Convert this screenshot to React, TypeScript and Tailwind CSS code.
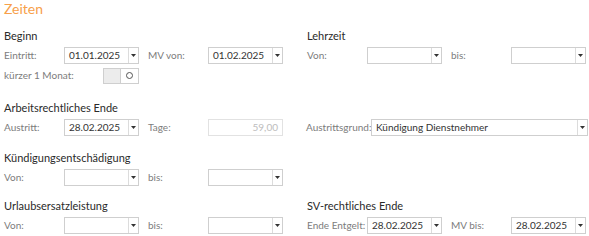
import type { ReactNode } from 'react';

const FONT = 'Lato, "Noto Sans", "Liberation Sans", sans-serif';

function Arrow() {
  return (
    <svg width="5" height="3" viewBox="0 0 5 3" className="block">
      <path d="M0 0h5L2.5 3z" fill="#333" />
    </svg>
  );
}

function DateBox({ value = '', wide = false }: { value?: string; wide?: boolean }) {
  return (
    <div
      className={`flex h-[17px] border border-[#cfcfcf] bg-white ${wide ? 'flex-1' : 'w-[75px]'}`}
    >
      <div className="flex-1 pl-[4px] text-[10px] leading-[15px] text-[#333] truncate">{value}</div>
      <div className="w-[10px] border-l border-[#dcdcdc] flex items-center justify-center">
        <Arrow />
      </div>
    </div>
  );
}

function Label({ children, w = 'w-[60px]' }: { children: ReactNode; w?: string }) {
  return (
    <div className={`${w} shrink-0 whitespace-nowrap text-[10px] text-[#7c7c7c] leading-[20px]`}>
      {children}
    </div>
  );
}

function Heading({ children }: { children: ReactNode }) {
  return <div className="h-[18px] text-[11px] leading-[18px] text-[#2a2a2a]">{children}</div>;
}

function Row({ children }: { children: ReactNode }) {
  return <div className="flex items-center h-[20px]">{children}</div>;
}

function PairRow({ l1, v1 = '', l2, v2 = '' }: { l1: string; v1?: string; l2: string; v2?: string }) {
  return (
    <Row>
      <Label>{l1}</Label>
      <DateBox value={v1} />
      <div className="w-[9px]" />
      <Label>{l2}</Label>
      <DateBox value={v2} />
    </Row>
  );
}

export default function App() {
  return (
    <div className="w-[589px] h-[236px] bg-white overflow-hidden" style={{ fontFamily: FONT }}>
      <div className="pl-[4px] h-[20px] text-[14px] leading-[18px] text-[#f7a04a]">Zeiten</div>

      <div className="grid grid-cols-[280px_282px] gap-x-[23px] pl-[4px] mt-[7px]">
        <div>
          <Heading>Beginn</Heading>
          <PairRow l1="Eintritt:" v1="01.01.2025" l2="MV von:" v2="01.02.2025" />
          <Row>
            <Label w="w-[99px]">kürzer 1 Monat:</Label>
            <div className="flex h-[16px] w-[36px] border border-[#cfcfcf] mt-[1px]">
              <div className="w-[17px] bg-[#ececec] border-r border-[#cfcfcf]" />
              <div className="flex-1 flex items-center justify-center bg-white">
                <div className="w-[7px] h-[7px] rounded-full border border-[#555]" />
              </div>
            </div>
          </Row>
        </div>
        <div>
          <Heading>Lehrzeit</Heading>
          <PairRow l1="Von:" l2="bis:" />
        </div>
      </div>

      <div className="pl-[4px] mt-[14px]">
        <Heading>Arbeitsrechtliches Ende</Heading>
        <Row>
          <Label>Austritt:</Label>
          <DateBox value="28.02.2025" />
          <div className="w-[9px]" />
          <Label>Tage:</Label>
          <div className="w-[75px] h-[17px] border border-[#e2e2e2] text-right pr-[4px] text-[10px] leading-[15px] text-[#bdbdbd]">
            59,00
          </div>
          <div className="w-[23px]" />
          <Label w="w-[65px]">Austrittsgrund:</Label>
          <DateBox value="Kündigung Dienstnehmer" wide />
          <div className="w-[1px]" />
        </Row>
      </div>

      <div className="pl-[4px] mt-[12px]">
        <div className="w-[280px]">
          <Heading>Kündigungsentschädigung</Heading>
          <PairRow l1="Von:" l2="bis:" />
        </div>
      </div>

      <div className="grid grid-cols-[280px_282px] gap-x-[23px] pl-[4px] mt-[10px]">
        <div>
          <Heading>Urlaubsersatzleistung</Heading>
          <PairRow l1="Von:" l2="bis:" />
        </div>
        <div>
          <Heading>SV-rechtliches Ende</Heading>
          <PairRow l1="Ende Entgelt:" v1="28.02.2025" l2="MV bis:" v2="28.02.2025" />
        </div>
      </div>
    </div>
  );
}
